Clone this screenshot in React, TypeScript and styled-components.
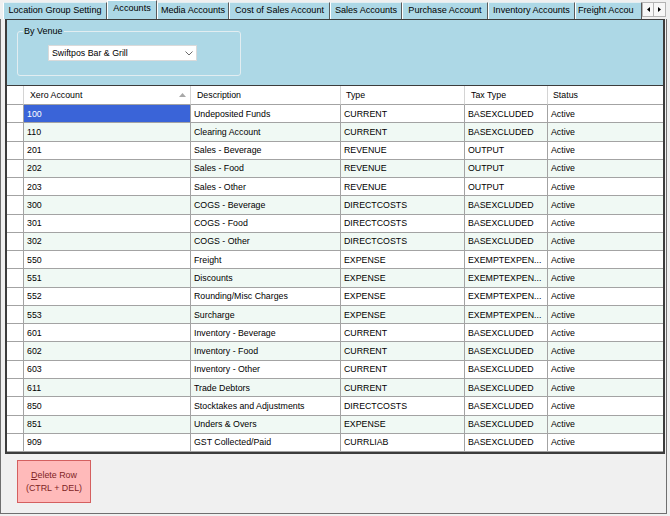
import styled, { createGlobalStyle } from 'styled-components';

const GlobalStyle = createGlobalStyle`
  html, body {
    margin: 0;
    padding: 0;
  }
  body {
    width: 670px;
    height: 516px;
    overflow: hidden;
    background: #f0f0f0;
    font-family: 'Liberation Sans', Arial, sans-serif;
    color: #000;
  }
`;

const Window = styled.div`
  width: 670px;
  height: 516px;
  display: flex;
  flex-direction: column;
  background: #f0f0f0;
`;

const TabStrip = styled.div`
  height: 19px;
  display: flex;
  align-items: flex-end;
  padding-left: 3px;
`;

const Tab = styled.div<{ $w: number; $active?: boolean; $start?: boolean }>`
  box-sizing: border-box;
  width: ${(p) => p.$w}px;
  height: ${(p) => (p.$active ? 19 : 17)}px;
  padding: ${(p) => (p.$active ? '0 0 2px' : '0 2px')};
  background: #add8e6;
  border-top: 1px solid ${(p) => (p.$active ? '#ffffff' : '#e3eef2')};
  border-left: 1px solid #ffffff;
  border-right: 1px solid #5a5a5a;
  font-size: 9.1px;
  line-height: 15px;
  text-align: ${(p) => (p.$start ? 'left' : 'center')};
  white-space: nowrap;
  overflow: hidden;
`;

const ScrollButtons = styled.div`
  display: flex;
  height: 15px;
  margin: 0 0 2px 0;
`;

const ScrollButton = styled.div`
  box-sizing: border-box;
  width: 12px;
  height: 15px;
  display: flex;
  align-items: center;
  justify-content: center;
  background: #f7f7f7;
  border: 1px solid #b4b4b4;
  & + & {
    border-left: none;
  }
`;

const TabPage = styled.div`
  box-sizing: border-box;
  width: 667px;
  height: 495px;
  border: 1px solid #6f6f6f;
  border-top: none;
  padding: 0 0 0 4px;
  display: flex;
  flex-direction: column;
`;

const Frame = styled.div`
  box-sizing: border-box;
  width: 660px;
  border: 2px solid #3c3c3c;
  border-top-width: 1px;
  display: flex;
  flex-direction: column;
`;

const VenuePanel = styled.div`
  height: 65px;
  background: #add8e6;
  padding: 6px 0 0 10px;
  box-sizing: border-box;
`;

const GroupBox = styled.fieldset`
  box-sizing: border-box;
  width: 224px;
  height: 50px;
  margin: 0;
  padding: 8px 0 0 5px;
  border: 1px solid #e2edf1;
  border-radius: 3px;
`;

const GroupLabel = styled.legend`
  padding: 0 1px;
  font-size: 9px;
  line-height: 11px;
`;

const Combo = styled.div`
  box-sizing: border-box;
  width: 149px;
  height: 16px;
  margin-left: 25px;
  background: #ffffff;
  border: 1px solid #dadada;
  display: flex;
  align-items: center;
  justify-content: space-between;
  padding: 0 3px 0 3px;
  font-size: 8.8px;
`;

const Grid = styled.div`
  border-top: 1px solid #3c3c3c;
  background: #ffffff;
  font-size: 8.8px;
`;

const Row = styled.div<{ $head?: boolean }>`
  box-sizing: border-box;
  display: grid;
  grid-template-columns: 17px 167px 150px 124px 83px 1fr;
  height: ${(p) => (p.$head ? '19px' : '18.28px')};
`;

const Cell = styled.div<{ $alt?: boolean; $selected?: boolean; $last?: boolean; $pad?: number }>`
  box-sizing: border-box;
  display: flex;
  align-items: center;
  justify-content: space-between;
  padding: 0 4px 0 ${(p) => p.$pad ?? 3}px;
  border-bottom: 1px solid #a3a3a3;
  border-right: ${(p) => (p.$last ? 'none' : '1px solid #a3a3a3')};
  background: ${(p) => (p.$selected ? '#3a64d8' : p.$alt ? '#f0f9f4' : '#ffffff')};
  color: ${(p) => (p.$selected ? '#ffffff' : '#000000')};
  white-space: nowrap;
  overflow: hidden;
`;

const HeadCell = styled(Cell)`
  border-right-color: #d4d4d4;
`;

const ButtonArea = styled.div`
  padding: 6px 0 0 12px;
`;

const DeleteButton = styled.button`
  box-sizing: border-box;
  width: 74px;
  height: 43px;
  padding: 0;
  background: #ffbaba;
  border: 1px solid #d45f5f;
  color: #7e1f1f;
  font-family: 'Liberation Sans', Arial, sans-serif;
  font-size: 8.9px;
  line-height: 13px;
  text-align: center;
`;

const tabs = [
  { label: 'Location Group Setting', w: 104 },
  { label: 'Accounts', w: 50, active: true },
  { label: 'Media Accounts', w: 72 },
  { label: 'Cost of Sales Account', w: 101 },
  { label: 'Sales Accounts', w: 72 },
  { label: 'Purchase Account', w: 86 },
  { label: 'Inventory Accounts', w: 87 },
  { label: 'Freight Accou', w: 67, start: true },
];

const rows: [string, string, string, string][] = [
  ['100', 'Undeposited Funds', 'CURRENT', 'BASEXCLUDED'],
  ['110', 'Clearing Account', 'CURRENT', 'BASEXCLUDED'],
  ['201', 'Sales - Beverage', 'REVENUE', 'OUTPUT'],
  ['202', 'Sales - Food', 'REVENUE', 'OUTPUT'],
  ['203', 'Sales - Other', 'REVENUE', 'OUTPUT'],
  ['300', 'COGS - Beverage', 'DIRECTCOSTS', 'BASEXCLUDED'],
  ['301', 'COGS - Food', 'DIRECTCOSTS', 'BASEXCLUDED'],
  ['302', 'COGS - Other', 'DIRECTCOSTS', 'BASEXCLUDED'],
  ['550', 'Freight', 'EXPENSE', 'EXEMPTEXPEN...'],
  ['551', 'Discounts', 'EXPENSE', 'EXEMPTEXPEN...'],
  ['552', 'Rounding/Misc Charges', 'EXPENSE', 'EXEMPTEXPEN...'],
  ['553', 'Surcharge', 'EXPENSE', 'EXEMPTEXPEN...'],
  ['601', 'Inventory - Beverage', 'CURRENT', 'BASEXCLUDED'],
  ['602', 'Inventory - Food', 'CURRENT', 'BASEXCLUDED'],
  ['603', 'Inventory - Other', 'CURRENT', 'BASEXCLUDED'],
  ['611', 'Trade Debtors', 'CURRENT', 'BASEXCLUDED'],
  ['850', 'Stocktakes and Adjustments', 'DIRECTCOSTS', 'BASEXCLUDED'],
  ['851', 'Unders & Overs', 'EXPENSE', 'BASEXCLUDED'],
  ['909', 'GST Collected/Paid', 'CURRLIAB', 'BASEXCLUDED'],
];

function SortUp() {
  return (
    <svg width="7" height="4" viewBox="0 0 7 4">
      <polygon points="0,4 3.5,0 7,4" fill="#a8a8a8" />
    </svg>
  );
}

function Chevron() {
  return (
    <svg width="8" height="5" viewBox="0 0 8 5">
      <polyline points="0.5,0.5 4,4 7.5,0.5" fill="none" stroke="#6a6a6a" strokeWidth="1" />
    </svg>
  );
}

function Arrow({ dir }: { dir: 'left' | 'right' }) {
  return (
    <svg width="3" height="5" viewBox="0 0 3 5">
      <polygon points={dir === 'left' ? '3,0 0,2.5 3,5' : '0,0 3,2.5 0,5'} fill="#000" />
    </svg>
  );
}

export default function App() {
  return (
    <Window>
      <GlobalStyle />
      <TabStrip>
        {tabs.map((t) => (
          <Tab key={t.label} $w={t.w} $active={t.active} $start={t.start}>
            {t.label}
          </Tab>
        ))}
        <ScrollButtons>
          <ScrollButton>
            <Arrow dir="left" />
          </ScrollButton>
          <ScrollButton>
            <Arrow dir="right" />
          </ScrollButton>
        </ScrollButtons>
      </TabStrip>

      <TabPage>
        <Frame>
          <VenuePanel>
            <GroupBox>
              <GroupLabel>By Venue</GroupLabel>
              <Combo>
                <span>Swiftpos Bar &amp; Grill</span>
                <Chevron />
              </Combo>
            </GroupBox>
          </VenuePanel>

          <Grid>
            <Row $head>
              <HeadCell />
              <HeadCell $pad={6}>
                <span>Xero Account</span>
                <SortUp />
              </HeadCell>
              <HeadCell $pad={6}>Description</HeadCell>
              <HeadCell $pad={5}>Type</HeadCell>
              <HeadCell $pad={6}>Tax Type</HeadCell>
              <HeadCell $pad={5} $last>
                Status
              </HeadCell>
            </Row>
            {rows.map(([code, desc, type, tax], i) => (
              <Row key={code}>
                <Cell />
                <Cell $alt={i % 2 === 1} $selected={i === 0}>
                  {code}
                </Cell>
                <Cell $alt={i % 2 === 1}>{desc}</Cell>
                <Cell $alt={i % 2 === 1}>{type}</Cell>
                <Cell $alt={i % 2 === 1}>{tax}</Cell>
                <Cell $alt={i % 2 === 1} $last>
                  Active
                </Cell>
              </Row>
            ))}
          </Grid>
        </Frame>

        <ButtonArea>
          <DeleteButton>
            <u>D</u>elete Row
            <br />
            (CTRL + DEL)
          </DeleteButton>
        </ButtonArea>
      </TabPage>
    </Window>
  );
}
